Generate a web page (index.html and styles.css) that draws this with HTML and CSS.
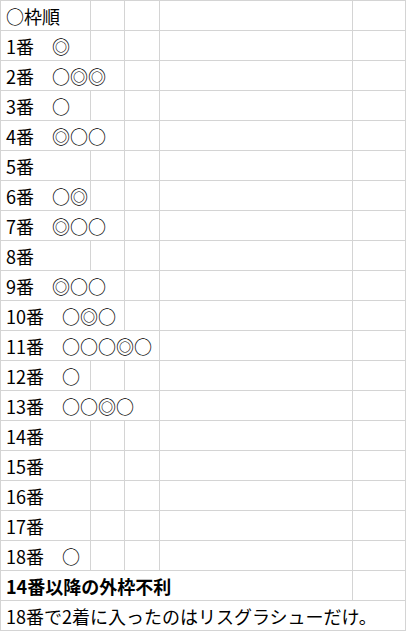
FILE: index.html
```html
<!DOCTYPE html>
<html lang="ja">
<head>
<meta charset="utf-8">
<title>枠順</title>
<link rel="stylesheet" href="styles.css">
</head>
<body>
<div class="sheet">
  <div class="cell">○枠順</div><div class="cell"></div><div class="cell"></div><div class="cell"></div><div class="cell"></div>
  <div class="cell">1番　◎</div><div class="cell"></div><div class="cell"></div><div class="cell"></div><div class="cell"></div>
  <div class="cell span2">2番　○◎◎</div><div class="cell"></div><div class="cell"></div><div class="cell"></div>
  <div class="cell">3番　○</div><div class="cell"></div><div class="cell"></div><div class="cell"></div><div class="cell"></div>
  <div class="cell span2">4番　◎○○</div><div class="cell"></div><div class="cell"></div><div class="cell"></div>
  <div class="cell">5番</div><div class="cell"></div><div class="cell"></div><div class="cell"></div><div class="cell"></div>
  <div class="cell">6番　○◎</div><div class="cell"></div><div class="cell"></div><div class="cell"></div><div class="cell"></div>
  <div class="cell span2">7番　◎○○</div><div class="cell"></div><div class="cell"></div><div class="cell"></div>
  <div class="cell">8番</div><div class="cell"></div><div class="cell"></div><div class="cell"></div><div class="cell"></div>
  <div class="cell span2">9番　◎○○</div><div class="cell"></div><div class="cell"></div><div class="cell"></div>
  <div class="cell span2">10番　○◎○</div><div class="cell"></div><div class="cell"></div><div class="cell"></div>
  <div class="cell span3">11番　○○○◎○</div><div class="cell"></div><div class="cell"></div>
  <div class="cell">12番　○</div><div class="cell"></div><div class="cell"></div><div class="cell"></div><div class="cell"></div>
  <div class="cell span3">13番　○○◎○</div><div class="cell"></div><div class="cell"></div>
  <div class="cell">14番</div><div class="cell"></div><div class="cell"></div><div class="cell"></div><div class="cell"></div>
  <div class="cell">15番</div><div class="cell"></div><div class="cell"></div><div class="cell"></div><div class="cell"></div>
  <div class="cell">16番</div><div class="cell"></div><div class="cell"></div><div class="cell"></div><div class="cell"></div>
  <div class="cell">17番</div><div class="cell"></div><div class="cell"></div><div class="cell"></div><div class="cell"></div>
  <div class="cell">18番　○</div><div class="cell"></div><div class="cell"></div><div class="cell"></div><div class="cell"></div>
  <div class="cell span4 bold">14番以降の外枠不利</div><div class="cell"></div>
  <div class="cell span5">18番で2着に入ったのはリスグラシューだけ。</div>
</div>
</body>
</html>
```
FILE: styles.css
```css
html, body {
  margin: 0;
  padding: 0;
  background: #ffffff;
}

.sheet {
  display: grid;
  grid-template-columns: 90px 34px 35px 193px 53px;
  grid-auto-rows: 30px;
  border-left: 1px solid #d4d4d4;
  border-top: 1px solid #d4d4d4;
  width: max-content;
  font-family: "Noto Sans CJK JP", "Noto Sans", sans-serif;
  font-size: 18px;
  font-weight: 400;
  color: #000000;
}

.cell {
  border-right: 1px solid #d4d4d4;
  border-bottom: 1px solid #d4d4d4;
  padding-left: 5px;
  display: flex;
  align-items: center;
  white-space: nowrap;
  overflow: visible;
  line-height: 1;
}

.span2 { grid-column: span 2; }
.span3 { grid-column: span 3; }
.span4 { grid-column: span 4; }
.span5 { grid-column: span 5; }

.bold { font-weight: 700; }
```
